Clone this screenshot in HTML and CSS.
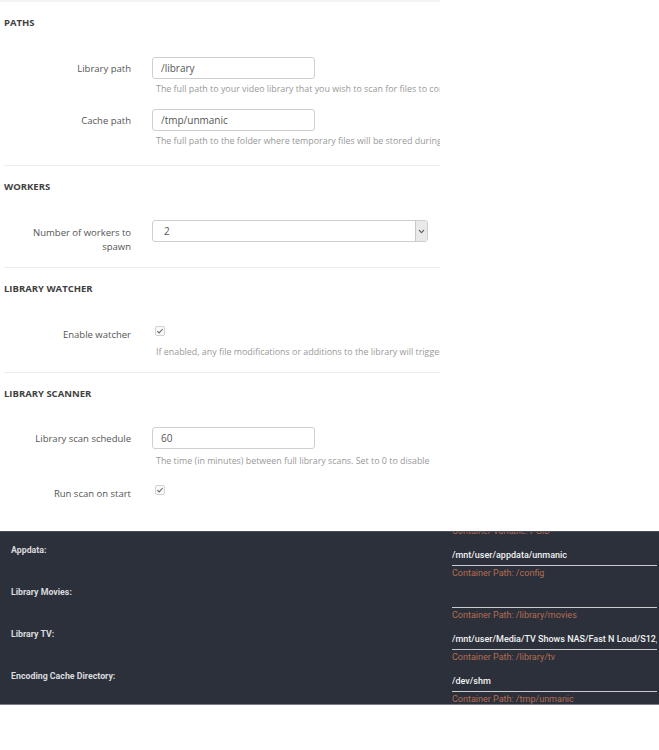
FILE: index.html
```html
<!DOCTYPE html>
<html lang="en">
<head>
<meta charset="utf-8">
<title>Settings</title>
<link rel="stylesheet" href="styles.css">
</head>
<body>
<div class="settings">
  <div class="topbar"></div>

  <section class="group group--paths">
    <h3 class="group-title">PATHS</h3>
    <div class="field">
      <label class="field-label">Library path</label>
      <div class="field-control">
        <input class="text-input" type="text" value="/library">
        <p class="help">The full path to your video library that you wish to scan for files to convert</p>
      </div>
    </div>
    <div class="field">
      <label class="field-label">Cache path</label>
      <div class="field-control">
        <input class="text-input" type="text" value="/tmp/unmanic">
        <p class="help">The full path to the folder where temporary files will be stored during conversion</p>
      </div>
    </div>
  </section>

  <section class="group group--workers">
    <h3 class="group-title">WORKERS</h3>
    <div class="field">
      <label class="field-label field-label--wide">Number of workers to spawn</label>
      <div class="field-control">
        <div class="select">
          <span class="select-value">2</span>
          <span class="select-arrow">
            <svg width="7" height="5" viewBox="0 0 7 5"><path d="M1 1 L3.5 3.6 L6 1" fill="none" stroke="#666" stroke-width="1.1"/></svg>
          </span>
        </div>
      </div>
    </div>
  </section>

  <section class="group group--watcher">
    <h3 class="group-title">LIBRARY WATCHER</h3>
    <div class="field">
      <label class="field-label">Enable watcher</label>
      <div class="field-control">
        <div class="check-wrap">
          <span class="check">
            <svg width="8" height="8" viewBox="0 0 8 8"><path d="M1.3 4.2 L3.1 5.9 L6.7 2" fill="none" stroke="#666" stroke-width="1.1"/></svg>
          </span>
        </div>
        <p class="help">If enabled, any file modifications or additions to the library will trigger a file test</p>
      </div>
    </div>
  </section>

  <section class="group group--scanner">
    <h3 class="group-title">LIBRARY SCANNER</h3>
    <div class="field">
      <label class="field-label">Library scan schedule</label>
      <div class="field-control">
        <input class="text-input" type="text" value="60">
        <p class="help">The time (in minutes) between full library scans. Set to 0 to disable</p>
      </div>
    </div>
    <div class="field">
      <label class="field-label">Run scan on start</label>
      <div class="field-control">
        <div class="check-wrap">
          <span class="check">
            <svg width="8" height="8" viewBox="0 0 8 8"><path d="M1.3 4.2 L3.1 5.9 L6.7 2" fill="none" stroke="#666" stroke-width="1.1"/></svg>
          </span>
        </div>
      </div>
    </div>
  </section>
</div>

<div class="docker">
  <div class="docker-list">
    <div class="mapping">
      <div class="mapping-name">PGID:</div>
      <div class="mapping-body">
        <div class="mapping-value">100</div>
        <div class="mapping-target">Container Variable: PGID</div>
      </div>
    </div>
    <div class="mapping">
      <div class="mapping-name">Appdata:</div>
      <div class="mapping-body">
        <div class="mapping-value">/mnt/user/appdata/unmanic</div>
        <div class="mapping-target">Container Path: /config</div>
      </div>
    </div>
    <div class="mapping">
      <div class="mapping-name">Library Movies:</div>
      <div class="mapping-body">
        <div class="mapping-value"></div>
        <div class="mapping-target">Container Path: /library/movies</div>
      </div>
    </div>
    <div class="mapping">
      <div class="mapping-name">Library TV:</div>
      <div class="mapping-body">
        <div class="mapping-value">/mnt/user/Media/TV Shows NAS/Fast N Loud/S12,</div>
        <div class="mapping-target">Container Path: /library/tv</div>
      </div>
    </div>
    <div class="mapping">
      <div class="mapping-name">Encoding Cache Directory:</div>
      <div class="mapping-body">
        <div class="mapping-value">/dev/shm</div>
        <div class="mapping-target">Container Path: /tmp/unmanic</div>
      </div>
    </div>
  </div>
</div>
</body>
</html>
```

FILE: styles.css
```css
html, body {
  margin: 0;
  padding: 0;
  background: #ffffff;
}

/* ---------- settings form ---------- */
.settings {
  width: 440px;
  overflow: hidden;
  font-family: "Open Sans", "Liberation Sans", sans-serif;
  color: #555;
}

.topbar {
  height: 2px;
  background: #f3f3f3;
}

.group {
  margin-left: 4px;
  padding-top: 14px;
  border-bottom: 1px solid #ececec;
}

.group--paths { padding-bottom: 18px; }
.group--workers { padding-bottom: 13px; }
.group--watcher { padding-bottom: 14px; }
.group--scanner { padding-bottom: 0; border-bottom: none; }

.group-title {
  margin: 0 0 26.5px;
  font-size: 9.5px;
  line-height: 14px;
  font-weight: 700;
  color: #3f3f3f;
}

.field {
  display: grid;
  grid-template-columns: 127px 288px;
  column-gap: 21px;
  margin-bottom: 14px;
}

.group--scanner .field { margin-bottom: 15px; }

.field:last-child,
.group--scanner .field:last-child { margin-bottom: 0; }

.field-label {
  text-align: right;
  padding-top: 5px;
  font-size: 9.5px;
  line-height: 14px;
  color: #555;
}

.field-label--wide { padding-top: 6px; }

.field-control { min-width: 0; }

.text-input {
  display: block;
  box-sizing: border-box;
  width: 163px;
  height: 22px;
  margin: 0;
  padding: 0 8px;
  border: 1px solid #cfcfcf;
  border-radius: 3px;
  background: #fff;
  font-family: inherit;
  font-size: 10px;
  color: #555;
  outline: none;
}

.help {
  margin: 4px 0 0 4px;
  font-size: 8.9px;
  line-height: 12px;
  color: #999;
  white-space: nowrap;
}

.group--scanner .help { margin-top: 5.5px; }

/* select box with gray arrow button */
.select {
  display: flex;
  box-sizing: border-box;
  width: 276px;
  height: 22px;
  border: 1px solid #cfcfcf;
  border-radius: 3px;
  overflow: hidden;
}

.select-value {
  flex: 1;
  padding-left: 11px;
  font-size: 10px;
  line-height: 20px;
  color: #555;
}

.select-arrow {
  display: flex;
  align-items: center;
  justify-content: center;
  width: 11px;
  background: #e9e9e9;
  border-left: 1px solid #c9c9c9;
}

/* checkbox */
.check-wrap {
  box-sizing: border-box;
  height: 19px;
  padding: 3px 0 0 3px;
}

.check {
  display: flex;
  align-items: center;
  justify-content: center;
  box-sizing: border-box;
  width: 10px;
  height: 10px;
  border: 1px solid #d2d2d2;
  border-radius: 2px;
  background: #fafafa;
}

/* ---------- docker volume mappings ---------- */
.docker {
  box-sizing: border-box;
  height: 174px;
  margin-top: 30.5px;
  overflow: hidden;
  background: #2b303b;
  border-top: 1px solid #4a4f59;
  border-bottom: 1px solid #7a7f89;
  font-family: Roboto, "Liberation Sans", sans-serif;
}

.docker-list {
  margin-top: -30px;
}

.mapping {
  display: grid;
  grid-template-columns: 452px 205px;
  height: 42px;
}

.mapping-name {
  padding-left: 11px;
  font-size: 8.8px;
  line-height: 12px;
  font-weight: 700;
  color: #d9dadd;
}

.mapping-body {
  padding-top: 4px;
  min-width: 0;
}

.mapping-value {
  height: 14px;
  padding-bottom: 3px;
  border-bottom: 1px solid #c9cacd;
  font-size: 9px;
  line-height: 14px;
  font-weight: 500;
  color: #f2f2f2;
  white-space: nowrap;
  overflow: hidden;
}

.mapping-target {
  margin-top: 1px;
  font-size: 9px;
  line-height: 12px;
  color: #b66c52;
  white-space: nowrap;
}
```
